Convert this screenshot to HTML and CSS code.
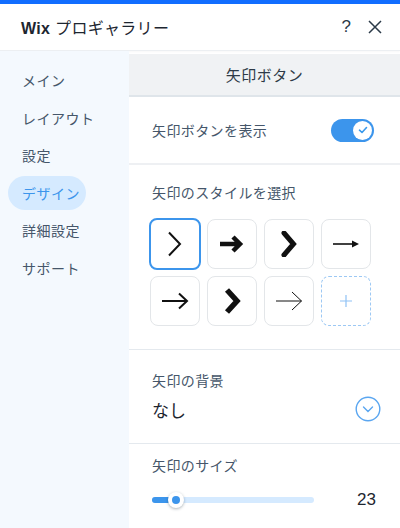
FILE: index.html
```html
<!DOCTYPE html>
<html>
<head>
    <meta charset="UTF-8">
    <title>Wix プロギャラリー</title>
    <link rel="stylesheet" href="styles.css">
</head>
<body>
    <div class="topline"></div>
    <header class="header">
        <div class="title"><b>Wix</b> プロギャラリー</div>
        <div class="header-actions">
            <span class="help">?</span>
            <svg class="close" width="14" height="14" viewBox="0 0 14 14"><path d="M1 1L13 13M13 1L1 13" stroke="#2b3a48" stroke-width="1.5" fill="none"/></svg>
        </div>
    </header>
    <div class="main">
        <nav class="sidebar">
            <div class="nav-item">メイン</div>
            <div class="nav-item">レイアウト</div>
            <div class="nav-item">設定</div>
            <div class="nav-item active">デザイン</div>
            <div class="nav-item">詳細設定</div>
            <div class="nav-item">サポート</div>
        </nav>
        <div class="panel">
            <div class="panel-title">矢印ボタン</div>

            <div class="row toggle-row">
                <span class="label">矢印ボタンを表示</span>
                <div class="toggle">
                    <div class="knob">
                        <svg width="10" height="8" viewBox="0 0 10 8"><path d="M1.5 4.2L4 6.5L8.5 1.5" stroke="#3899ec" stroke-width="1.6" fill="none" stroke-linecap="round" stroke-linejoin="round"/></svg>
                    </div>
                </div>
            </div>

            <div class="section styles-section">
                <div class="label">矢印のスタイルを選択</div>
                <div class="arrow-grid">
                    <div class="arrow-box selected">
                        <svg width="24" height="26" viewBox="0 0 24 26"><path d="M6 1.5L17 13L6 24.5" stroke="#111" stroke-width="2" fill="none"/></svg>
                    </div>
                    <div class="arrow-box">
                        <svg width="26" height="18" viewBox="0 0 26 18"><path d="M1 9H21M14 2L21 9L14 16" stroke="#111" stroke-width="4.5" fill="none"/></svg>
                    </div>
                    <div class="arrow-box">
                        <svg width="18" height="26" viewBox="0 0 18 26"><path d="M4 2L13.5 13L4 24" stroke="#111" stroke-width="5" fill="none" stroke-linecap="round"/></svg>
                    </div>
                    <div class="arrow-box">
                        <svg width="28" height="10" viewBox="0 0 28 10"><path d="M1 5H22" stroke="#111" stroke-width="1.6"/><path d="M20 1.5L27 5L20 8.5Z" fill="#111"/></svg>
                    </div>
                    <div class="arrow-box">
                        <svg width="28" height="18" viewBox="0 0 28 18"><path d="M1 9H26M18 1.5L26 9L18 16.5" stroke="#111" stroke-width="2" fill="none"/></svg>
                    </div>
                    <div class="arrow-box">
                        <svg width="18" height="26" viewBox="0 0 18 26"><path d="M4 2L14 13L4 24" stroke="#111" stroke-width="5.5" fill="none"/></svg>
                    </div>
                    <div class="arrow-box">
                        <svg width="28" height="20" viewBox="0 0 28 20"><path d="M1 10H26.5M17 1L26.5 10L17 19" stroke="#111" stroke-width="1" fill="none"/></svg>
                    </div>
                    <div class="arrow-box add">
                        <svg width="12" height="12" viewBox="0 0 12 12"><path d="M6 0V12M0 6H12" stroke="#8fc2f5" stroke-width="1.2"/></svg>
                    </div>
                </div>
            </div>

            <div class="section bg-section">
                <div class="label">矢印の背景</div>
                <div class="dropdown">
                    <span class="value">なし</span>
                    <svg width="26" height="26" viewBox="0 0 26 26"><circle cx="13" cy="13" r="11.8" stroke="#5aa6f0" stroke-width="1.4" fill="none"/><path d="M8.5 11L13 15.5L17.5 11" stroke="#5aa6f0" stroke-width="1.4" fill="none" stroke-linecap="round"/></svg>
                </div>
            </div>

            <div class="section size-section">
                <div class="label">矢印のサイズ</div>
                <div class="slider-row">
                    <div class="slider">
                        <div class="slider-fill" style="width: 24px"></div>
                        <div class="slider-thumb" style="left: 24px"></div>
                    </div>
                    <span class="slider-value">23</span>
                </div>
            </div>
        </div>
    </div>
</body>
</html>
```

FILE: styles.css
```css
body {
    margin: 0;
    font-family: "Noto Sans CJK JP", "Noto Sans", sans-serif;
    color: #45566a;
    background: #fff;
    width: 400px;
    height: 528px;
    overflow: hidden;
}
.topline {
    height: 4px;
    background: #116dff;
}
.header {
    height: 46px;
    display: flex;
    align-items: center;
    justify-content: space-between;
    padding: 0 18px 0 21px;
    border-bottom: 1px solid #eceff2;
    box-shadow: 0 1px 2px rgba(0, 0, 0, 0.03);
}
.title {
    font-size: 16px;
    color: #1d2630;
    letter-spacing: 0.3px;
}
.title b {
    font-family: "Liberation Sans", Arial, sans-serif;
    font-weight: bold;
    margin-right: 1px;
}
.header-actions {
    display: flex;
    align-items: center;
    gap: 17px;
}
.help {
    font-family: "Liberation Sans", Arial, sans-serif;
    font-size: 17px;
    color: #2b3a48;
}
.main {
    display: flex;
    height: 477px;
}
.sidebar {
    width: 129px;
    flex-shrink: 0;
    background: #f4f9fe;
    padding: 12px 0 0 8px;
    box-sizing: border-box;
}
.nav-item {
    height: 34px;
    line-height: 34px;
    margin-bottom: 3.6px;
    padding-left: 14px;
    width: 78px;
    box-sizing: border-box;
    font-size: 14px;
    color: #45566a;
    border-radius: 17px;
    letter-spacing: 0.5px;
    white-space: nowrap;
}
.nav-item.active {
    background: #d5eaff;
    color: #3c95ec;
}
.panel {
    flex: 1;
    padding-top: 3px;
}
.panel-title {
    height: 41px;
    line-height: 41px;
    text-align: center;
    background: #f0f2f4;
    border-bottom: 2px solid #dfe5ea;
    font-size: 15px;
    color: #2e3a47;
    letter-spacing: 0.5px;
}
.label {
    font-size: 14px;
    color: #45566a;
    line-height: 20px;
    letter-spacing: 0.4px;
}
.row {
    display: flex;
    align-items: center;
    justify-content: space-between;
}
.toggle-row {
    height: 66px;
    padding: 0 26px 0 23px;
    border-bottom: 2px solid #eef0f3;
}
.toggle {
    width: 43px;
    height: 23px;
    border-radius: 12px;
    background: #3c95ec;
    display: flex;
    justify-content: flex-end;
    align-items: center;
    padding-right: 2px;
    box-sizing: border-box;
}
.knob {
    width: 19px;
    height: 19px;
    border-radius: 50%;
    background: #fff;
    display: flex;
    align-items: center;
    justify-content: center;
}
.section {
    padding: 0 22px 0 23px;
    border-bottom: 1px solid #e4e9ee;
}
.styles-section {
    padding-top: 17px;
    padding-bottom: 23px;
}
.arrow-grid {
    display: grid;
    grid-template-columns: repeat(4, 50px);
    grid-auto-rows: 50px;
    gap: 7px;
    margin-top: 17px;
    margin-left: -2px;
}
.arrow-box {
    border: 1px solid #e3e6e9;
    border-radius: 8px;
    display: flex;
    align-items: center;
    justify-content: center;
    box-sizing: border-box;
}
.arrow-box.selected {
    border: 2px solid #3c95ec;
    margin: -1px;
    width: 52px;
    height: 52px;
}
.arrow-box.add {
    border: 1px dashed #9cc8f4;
}
.bg-section {
    padding-top: 20px;
    padding-bottom: 21px;
}
.dropdown {
    display: flex;
    align-items: center;
    justify-content: space-between;
    margin-top: 6px;
    height: 26px;
    margin-right: -3px;
}
.value {
    font-size: 17px;
    color: #1d2630;
}
.size-section {
    padding-top: 11px;
    border-bottom: none;
}
.slider-row {
    display: flex;
    align-items: center;
    justify-content: space-between;
    margin-top: 13px;
    height: 24px;
    padding-right: 2px;
}
.slider {
    position: relative;
    width: 162px;
    height: 6px;
    border-radius: 3px;
    background: #d5eaff;
    margin-left: 0;
}
.slider-fill {
    height: 6px;
    border-radius: 3px;
    background: #3c95ec;
}
.slider-thumb {
    position: absolute;
    top: -5px;
    width: 16px;
    height: 16px;
    margin-left: -8px;
    border-radius: 50%;
    background: #fff;
    box-shadow: 0 1px 3px rgba(22, 45, 61, 0.35);
}
.slider-thumb::after {
    content: "";
    position: absolute;
    left: 4px;
    top: 4px;
    width: 8px;
    height: 8px;
    border-radius: 50%;
    background: #3c95ec;
}
.slider-value {
    font-family: "Liberation Sans", Arial, sans-serif;
    font-size: 17px;
    color: #1d2630;
}
```
